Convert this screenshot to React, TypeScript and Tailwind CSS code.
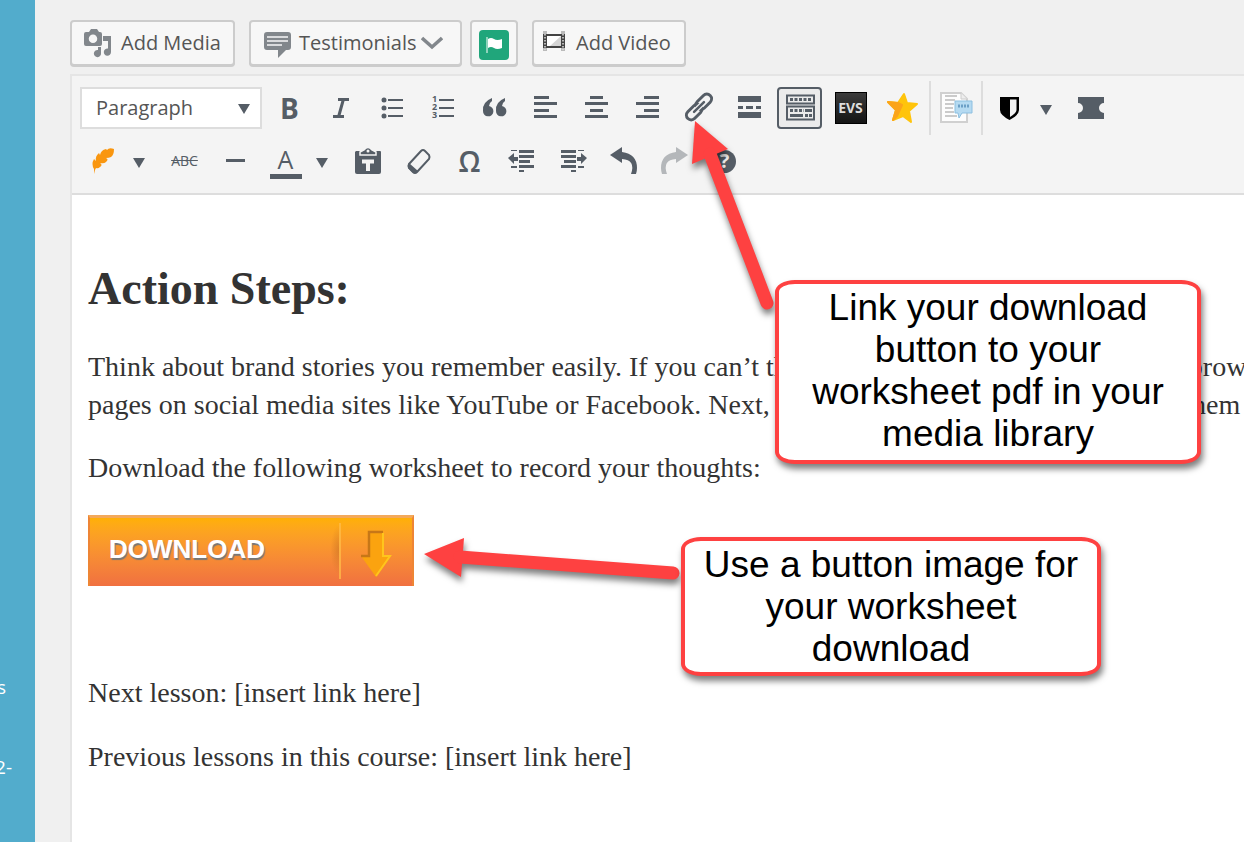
import React from "react";
import clsx from "clsx";

type IconProps = { children: React.ReactNode; className?: string };

function Icon({ children, className }: IconProps) {
  return (
    <svg viewBox="0 0 32 32" fill="currentColor" aria-hidden="true" className={clsx("size-8 shrink-0 overflow-visible", className)}>
      {children}
    </svg>
  );
}

function Caret() {
  return (
    <svg viewBox="0 0 12 10" fill="currentColor" aria-hidden="true" className="h-[10px] w-3">
      <path d="M0 0h12L6 10z" />
    </svg>
  );
}

type ToolProps = { label: string; children: React.ReactNode };

function Tool({ label, children }: ToolProps) {
  return (
    <button type="button" aria-label={label} className="flex h-[42px] w-[47px] shrink-0 items-center justify-center">
      {children}
    </button>
  );
}

function SplitTool({ label, children }: ToolProps) {
  return (
    <div className="mr-1 flex shrink-0">
      <button type="button" aria-label={label} className="flex h-[42px] w-[45px] items-center justify-center">
        {children}
      </button>
      <button type="button" aria-label={`${label} options`} className="flex h-[42px] w-7 items-center justify-center pt-1">
        <Caret />
      </button>
    </div>
  );
}

function MediaButton({ children, className, label }: { children: React.ReactNode; className?: string; label?: string }) {
  return (
    <button
      type="button"
      aria-label={label}
      className={clsx(
        "flex h-[46px] shrink-0 items-center rounded border-2 border-[#ccc] bg-[#f7f7f7] text-xl text-[#555] shadow-[0_1px_0_#ccc]",
        className
      )}
    >
      {children}
    </button>
  );
}

function MediaBar() {
  return (
    <div className="flex pt-5 pb-2">
      <MediaButton className="mr-[14px] w-[165px] gap-2 pl-[11px]">
        <svg viewBox="0 0 30 30" className="size-[30px] shrink-0" fill="#82878c" aria-hidden="true">
          <path
            fillRule="evenodd"
            d="M3 4h3l2-3h6l2 3h1q2 0 2 2v10q0 2-2 2H3q-2 0-2-2V6q0-2 2-2zM10 6.500a4 4 0 1 0 0 8.500a4 4 0 1 0 0-8.500z"
          />
          <path d="M20 8h8v16a3.600 3.600 0 1 1-3-3.500V13h-5z" />
          <path d="M15 19h3v6a3.600 3.600 0 1 1-3-3z" />
        </svg>
        Add Media
      </MediaButton>
      <MediaButton className="mr-2 w-[213px] pl-[13px]">
        <svg viewBox="0 0 28 26" className="mt-1 mr-[7px] h-[26px] w-7 shrink-0" fill="#82878c" aria-hidden="true">
          <path d="M3 0h21q3 0 3 3v12q0 3-3 3h-2l-8 8v-8H3q-3 0-3-3V3q0-3 3-3z" />
          <path d="M3 5h21M3 9h21M3 13h15" stroke="#f7f7f7" strokeWidth="1.500" />
        </svg>
        Testimonials
        <svg viewBox="0 0 22 14" className="ml-1 h-[14px] w-[22px] shrink-0" aria-hidden="true">
          <path d="M1 2l10 9 10-9" fill="none" stroke="#82878c" strokeWidth="3.500" />
        </svg>
      </MediaButton>
      <MediaButton className="mr-[14px] w-12 justify-center" label="Insert flag">
        <svg viewBox="0 0 30 30" className="mt-1 size-[30px] shrink-0" aria-hidden="true">
          <rect width="30" height="30" rx="4" fill="#20a67b" />
          <path d="M8 7v16" stroke="#b5e0d1" strokeWidth="1.500" />
          <path d="M9 9q3-2 6 0t8 0v9q-5 2-8 0t-6 0z" fill="#fff" />
        </svg>
      </MediaButton>
      <MediaButton className="w-[154px] pl-2">
        <svg viewBox="0 0 24 20" className="mr-[10px] mb-1 h-5 w-6 shrink-0" aria-hidden="true">
          <path d="M1 0h4v20H1zM19 0h4v20h-4z" fill="#bbb" />
          <path d="M1 3h22v14H1z" fill="#444" />
          <path d="M5 5h14v10H5z" fill="#fff" />
          <path d="M19 5v10H8z" fill="#d5d5d5" />
          <path d="M3 3v16M21 3v16" stroke="#ddd" strokeWidth="1.500" strokeDasharray="1.500 1.500" />
        </svg>
        Add Video
      </MediaButton>
    </div>
  );
}

function FirstRow() {
  return (
    <div className="flex h-[54px] items-center gap-1">
      <div className="relative h-[42px] w-[182px] shrink-0">
        <select aria-label="Block format" className="h-full w-full appearance-none border-2 border-[#ddd] bg-white pl-[14px] text-xl text-[#555]">
          <option>Paragraph</option>
        </select>
        <span className="pointer-events-none absolute top-[17px] right-3">
          <Caret />
        </span>
      </div>
      <Tool label="Bold">
        <span className="pb-px text-[28px] leading-8 font-bold">B</span>
      </Tool>
      <Tool label="Italic">
        <Icon>
          <path d="M13 7.500h11M8 24.500h11M18.500 7l-5 18" fill="none" stroke="currentColor" strokeWidth="3" />
        </Icon>
      </Tool>
      <Tool label="Bulleted list">
        <Icon>
          <path d="M12 8h15M12 16h15M12 24h15" stroke="currentColor" strokeWidth="2" />
          <circle cx="8" cy="8" r="2.500" />
          <circle cx="8" cy="16" r="2.500" />
          <circle cx="8" cy="24" r="2.500" />
        </Icon>
      </Tool>
      <Tool label="Numbered list">
        <Icon>
          <path d="M12 8h15M12 16h15M12 24h15" stroke="currentColor" strokeWidth="2" />
          <g fontSize="9" fontWeight="700">
            <text x="5" y="10">1</text>
            <text x="5" y="18">2</text>
            <text x="5" y="26">3</text>
          </g>
        </Icon>
      </Tool>
      <Tool label="Quote">
        <Icon>
          <path d="M14 6v3q-3 2-3 5a5.200 5.200 0 1 1-6 5Q4 10 14 6zM27 6v3q-3 2-3 5a5.200 5.200 0 1 1-6 5Q17 10 27 6z" />
        </Icon>
      </Tool>
      <Tool label="Align left">
        <Icon>
          <path d="M5 4h15v3H5zM5 10h23v3H5zM5 17h15v3H5zM5 23h23v3H5z" />
        </Icon>
      </Tool>
      <Tool label="Align center">
        <Icon>
          <path d="M10 4h13v3H10zM5 10h23v3H5zM10 17h13v3H10zM5 23h23v3H5z" />
        </Icon>
      </Tool>
      <Tool label="Align right">
        <Icon>
          <path d="M13 4h15v3H13zM5 10h23v3H5zM13 17h15v3H13zM5 23h23v3H5z" />
        </Icon>
      </Tool>
      <Tool label="Insert link">
        <Icon>
          <g transform="rotate(-45 17 15)" fill="none" stroke="currentColor" strokeWidth="3">
            <rect x="1" y="10.500" width="18" height="9.500" rx="4.700" />
            <rect x="15" y="10" width="18" height="9.500" rx="4.700" />
            <path d="M13 15h8" stroke="#f4f4f4" strokeWidth="5" />
            <path d="M10 15h14" strokeWidth="2.500" strokeLinecap="round" />
          </g>
        </Icon>
      </Tool>
      <Tool label="Read more">
        <Icon>
          <path d="M5 4h23v6H5zM5 14h5v3H5zM13 14h7v3h-7zM23 14h5v3h-5zM5 20h23v6H5z" />
        </Icon>
      </Tool>
      <button type="button" aria-label="Toolbar toggle" aria-pressed="true" className="mx-px flex h-[42px] w-[45px] shrink-0 items-center justify-center rounded border-2 border-[#555d66] bg-[#ebebeb]">
        <Icon>
          <path d="M3 3.500h27v8H3zM3 14.500h27v13H3z" fill="none" stroke="currentColor" strokeWidth="2" />
          <path d="M6 7.500h21M6 18.500h14" stroke="currentColor" strokeWidth="3" strokeDasharray="3 1.500" />
          <path d="M21 17h7v3h-7zM6 22h13v3H6zM21 22h3v3h-3zM25 22h3v3h-3z" />
        </Icon>
      </button>
      <Tool label="Easy video suite">
        <span className="flex size-8 items-center justify-center border border-black bg-gradient-to-b from-[#3c3c3c] to-[#151515] text-sm font-bold text-[#ddd]">EVS</span>
      </Tool>
      <Tool label="Star">
        <Icon>
          <g strokeWidth="2" strokeLinejoin="round">
            <path d="M18 2l3 9 10 1-8 7 2 11-8-6-10 4 3-10L2 10l10 1z" fill="#ffc40c" stroke="#ffc40c" />
            <path d="M2 10l10 1 4 2-5 11-4 4 3-10z" fill="#fba41a" stroke="#fba41a" />
          </g>
        </Icon>
      </Tool>
      <div className="flex h-[54px] w-[54px] shrink-0 items-center justify-center border-x-2 border-[#ddd]">
        <Tool label="Insert testimonial">
          <Icon>
            <path d="M1 1h20l6 6v23H1z" fill="#fdfdfd" stroke="#d0d0d0" strokeWidth="2" />
            <path d="M21 1v6h6" fill="#eee" stroke="#ccc" />
            <path d="M5 4h12M5 8h10M5 12h9M5 16h8M5 20h9M5 24h12" stroke="#bbb" strokeWidth="1.500" />
            <path d="M15 9h17v12H22l-3 5-1-5h-3z" fill="#b5daf1" stroke="#8cbfe0" />
            <path d="M18 14h11" stroke="#6b9fc6" strokeWidth="3" strokeDasharray="2 1" />
          </Icon>
        </Tool>
      </div>
      <SplitTool label="Membership">
        <Icon className="text-black">
          <path d="M6 5h19v13q0 5-9.500 10Q6 23 6 18z" />
          <path d="M16 7.500h6.500V18q0 3-6.500 7z" fill="#f4f4f4" />
        </Icon>
      </SplitTool>
      <Tool label="Ticket">
        <Icon>
          <path d="M2 5h26v6a5 5 0 0 0 0 10v6H2v-6a5 5 0 0 0 0-10z" />
        </Icon>
      </Tool>
    </div>
  );
}

function SecondRow() {
  return (
    <div className="flex h-[53px] items-center gap-1 pb-px">
      <SplitTool label="Feather">
        <Icon>
          <path
            d="M7 29l0-5Q4 19 7 14l2 2q-1-5 3-8l1 2q1-5 6-6l1 1q2-3 7-1 0 6-3 8-2 1-5 1 3 1 0 4-2 2-6 1 3 2 0 4-2 2-4 1l-1 2z"
            fill="#f9960f"
          />
        </Icon>
      </SplitTool>
      <Tool label="Strikethrough">
        <s className="text-sm">ABC</s>
      </Tool>
      <Tool label="Horizontal line">
        <Icon>
          <path d="M6 14h19v3H6z" />
        </Icon>
      </Tool>
      <SplitTool label="Text color">
        <span className="mt-1 flex h-8 w-8 items-center justify-center border-b-[5px] border-[#555d66] pb-1 text-[25px] leading-6">A</span>
      </SplitTool>
      <Tool label="Paste as text">
        <Icon>
          <path d="M4 6h24q1 0 1 1v20q0 2-2 2H5q-2 0-2-2V7z" />
          <path d="M8 10V7l4-2q4-5 8 0l4 2v3z" stroke="#f4f4f4" strokeWidth="1.500" />
          <circle cx="16" cy="6" r="1.500" fill="#f4f4f4" />
          <path d="M10 16.500h12M16 16v10" stroke="#f4f4f4" strokeWidth="4" />
        </Icon>
      </Tool>
      <Tool label="Clear formatting">
        <Icon>
          <path d="M6 19L18 6q2-2 4 0l4 4q1 2 0 4L14 27q-2 2-4 0l-4-4q-1-2 0-4z" fill="none" stroke="currentColor" strokeWidth="2" />
          <path d="M6 18l9 8-2 2q-2 1-4-1l-4-4q-1-3 1-5z" />
        </Icon>
      </Tool>
      <Tool label="Special character">
        <span className="text-[28px] leading-8 font-semibold">Ω</span>
      </Tool>
      <Tool label="Decrease indent">
        <Icon>
          <path d="M14 5h15v3H14zM14 10h15v3H14zM14 15h11v3H14zM14 20h15v3H14zM14 25h5v2h-5zM6 5h6v1H6zM6 21h6v2H6zM3 13l6-5v4h4v4H9v3z" />
        </Icon>
      </Tool>
      <Tool label="Increase indent">
        <Icon>
          <path d="M5 5h15v3H5zM5 10h15v3H5zM8 15h12v3H8zM5 20h15v3H5zM15 25h5v2h-5zM22 5h6v1h-6zM22 21h6v2h-6zM31 13l-6-5v4h-4v4h4v3z" />
        </Icon>
      </Tool>
      <Tool label="Undo">
        <Icon>
          <path d="M3 10l12-8v5q15 2 15 16 0 3-1 6h-5q5-14-9-15v4z" />
        </Icon>
      </Tool>
      <Tool label="Redo">
        <Icon className="text-[#b4b7ba]">
          <path d="M30 10L18 2v5Q3 9 3 23q0 3 1 6h5Q4 15 18 14v4z" />
        </Icon>
      </Tool>
      <Tool label="Help">
        <span className="flex size-[23px] items-center justify-center rounded-full bg-[#555d66] text-xl leading-5 font-bold text-[#f4f4f4]">?</span>
      </Tool>
    </div>
  );
}

function DownloadButton() {
  return (
    <a
      href="#download"
      className="mt-7 flex h-[71px] w-[326px] items-center border-x-2 border-t-[3px] border-x-[#ee8535] border-t-[#f3a95b] bg-gradient-to-b from-[#ffb005] to-[#f07040] pb-[6px] pl-[19px]"
    >
      <span className="flex-1 font-['Liberation_Sans'] text-[26px] leading-8 font-bold text-white [text-shadow:1px_2px_1px_#777]">
        DOWNLOAD
      </span>
      <svg viewBox="0 0 90 62" className="h-[62px] w-[90px] shrink-0" aria-hidden="true">
        <defs>
          <radialGradient id="fold" cx="1" cy="0.500" r="1" fy="0.500">
            <stop offset="0" stopColor="#bd6a20" stopOpacity="0.450" />
            <stop offset="0.500" stopColor="#bd6a20" stopOpacity="0" />
          </radialGradient>
        </defs>
        <path d="M0 7h17v50H0z" fill="url(#fold)" />
        <path d="M18 5v56" stroke="#ffbd4a" strokeWidth="1.500" />
        <path d="M47 14h14v24h8L54 59 39 38h8z" fill="#fba30f" />
        <path d="M39 38h8V14h14" fill="none" stroke="#c77717" strokeWidth="2.500" />
        <path d="M61 15v23h7L54 58" fill="none" stroke="#ffc51c" strokeWidth="2" />
      </svg>
    </a>
  );
}

function EditorBody() {
  return (
    <div className="flex-1 overflow-hidden bg-white px-4 pt-[70px] font-['Liberation_Serif',serif] text-[28px] leading-[38px] whitespace-nowrap text-[#333]">
      <h2 className="mb-[35px] text-[46px] leading-[48px] font-bold">Action Steps:</h2>
      <p className="mb-[25px]">
        Think about brand stories you remember easily. If you can’t think of any examples right now, just browse
        <br />
        pages on social media sites like YouTube or Facebook. Next, think about why you still remember them
      </p>
      <p>Download the following worksheet to record your thoughts:</p>
      <DownloadButton />
      <p className="mt-[88px] mb-[26px]">Next lesson: [insert link here]</p>
      <p>Previous lessons in this course: [insert link here]</p>
    </div>
  );
}

function Callout({ className, children }: { className: string; children: React.ReactNode }) {
  return (
    <div
      className={clsx(
        "absolute rounded-[20px/12px] border-4 border-[#fe4141] bg-white pt-[3px] text-center font-['Liberation_Sans',sans-serif] text-[37px] leading-[42px] whitespace-nowrap text-black shadow-[2px_5px_6px_rgba(0,0,0,0.5)]",
        className
      )}
    >
      {children}
    </div>
  );
}

function Annotations() {
  return (
    <>
      <svg aria-hidden="true" className="pointer-events-none absolute top-0 left-0 h-full w-full drop-shadow-[1px_5px_3px_rgba(0,0,0,0.5)]">
        <g fill="#fe4141" stroke="#fe4141">
          <path d="M695 121l33 28-36 15z" stroke="none" />
          <path d="M710 154l57 149" strokeWidth="13" strokeLinecap="round" />
          <path d="M424 554l40-16-3 39z" stroke="none" />
          <path d="M460 557l213 16" strokeWidth="13" strokeLinecap="round" />
        </g>
      </svg>
      <Callout className="top-[280px] left-[775px] h-[184px] w-[426px]">
        Link your download
        <br />
        button to your
        <br />
        worksheet pdf in your
        <br />
        media library
      </Callout>
      <Callout className="top-[537px] left-[681px] h-[139px] w-[420px]">
        Use a button image for
        <br />
        your worksheet
        <br />
        download
      </Callout>
    </>
  );
}

export default function App() {
  return (
    <div className="relative flex min-h-screen overflow-hidden bg-[#f0f0f0] font-['Open_Sans',sans-serif]">
      <nav className="flex w-[35px] shrink-0 flex-col overflow-hidden bg-[#52accc] pt-[675px] text-[19px] leading-6 text-white">
        <a href="#courses" className="mb-14 flex justify-end pr-[29px]">s</a>
        <a href="#version" className="flex justify-end pr-[23px]">2-</a>
      </nav>
      <main className="flex min-w-0 flex-1 flex-col pl-[35px]">
        <MediaBar />
        <section className="flex flex-1 flex-col border-t-2 border-l-2 border-[#e5e5e5]">
          <div className="border-b-2 border-[#ddd] bg-[#f4f4f4] py-[5px] pl-2 text-[#555d66]">
            <FirstRow />
            <SecondRow />
          </div>
          <EditorBody />
        </section>
      </main>
      <Annotations />
    </div>
  );
}
